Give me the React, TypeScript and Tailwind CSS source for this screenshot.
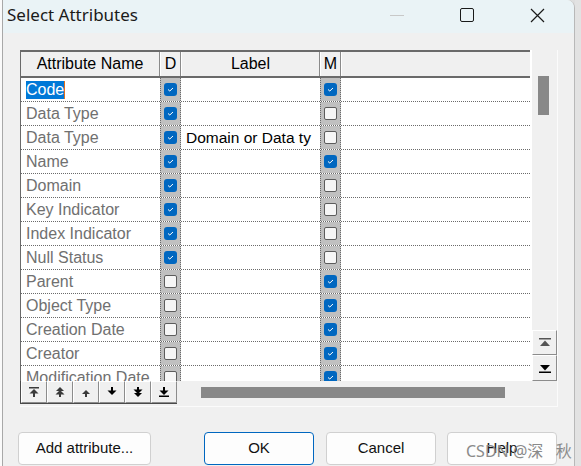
import React from "react";

interface Row {
  name: string;
  d: boolean;
  label?: string;
  m: boolean;
  selected?: boolean;
}

const rows: Row[] = [
  { name: "Code", d: true, m: true, selected: true },
  { name: "Data Type", d: true, m: false },
  { name: "Data Type", d: true, label: "Domain or Data ty", m: false },
  { name: "Name", d: true, m: true },
  { name: "Domain", d: true, m: false },
  { name: "Key Indicator", d: true, m: false },
  { name: "Index Indicator", d: true, m: false },
  { name: "Null Status", d: true, m: false },
  { name: "Parent", d: false, m: true },
  { name: "Object Type", d: false, m: true },
  { name: "Creation Date", d: false, m: true },
  { name: "Creator", d: false, m: true },
  { name: "Modification Date", d: false, m: true },
];

const Check = ({ on }: { on: boolean }) =>
  on ? (
    <div className="w-[13px] h-[13px] rounded-[3px] bg-[#0067c0] flex items-center justify-center">
      <svg width="7" height="5" viewBox="0 0 7 5">
        <path d="M1 2.5 L2.8 4 L6 1" fill="none" stroke="#fff" strokeWidth="1" />
      </svg>
    </div>
  ) : (
    <div className="w-[13px] h-[13px] rounded-[2px] bg-[#f5f5f5] border border-[#5c5c5c]" />
  );

// toolbar glyphs: bar/arrow combos
const ToolIcon = ({ kind }: { kind: number }) => {
  const up = kind < 3;
  const color = up ? "#3a3a3a" : "#000";
  const shapes: Record<number, React.ReactNode> = {
    0: (
      <>
        <rect x="0" y="0" width="10" height="1.5" />
        <path d="M5 2 L9.5 6.5 L0.5 6.5 Z" />
        <rect x="4" y="6" width="2" height="4" />
      </>
    ),
    1: (
      <>
        <path d="M5 0 L9 4 L1 4 Z" />
        <path d="M5 3 L9.5 7.5 L0.5 7.5 Z" />
        <rect x="4" y="7" width="2" height="3" />
      </>
    ),
    2: (
      <>
        <path d="M5 3 L9 7 L1 7 Z" />
        <rect x="4" y="7" width="2" height="3" />
      </>
    ),
    3: (
      <>
        <rect x="4" y="0" width="2" height="4" />
        <path d="M5 8 L9.5 3.5 L0.5 3.5 Z" />
      </>
    ),
    4: (
      <>
        <rect x="4" y="0" width="2" height="3" />
        <path d="M5 7 L9.5 2.5 L0.5 2.5 Z" />
        <path d="M5 10 L9 6 L1 6 Z" />
      </>
    ),
    5: (
      <>
        <rect x="4" y="0" width="2" height="4" />
        <path d="M5 8 L9.5 3.5 L0.5 3.5 Z" />
        <rect x="0" y="8.5" width="10" height="1.5" />
      </>
    ),
  };
  return (
    <svg width="10" height="10" viewBox="0 0 10 10" fill={color}>
      {shapes[kind]}
    </svg>
  );
};

const bevel =
  "bg-[#f0f0f0] border-t border-l border-t-white border-l-white border-b border-r border-b-[#8c8c8c] border-r-[#8c8c8c] flex items-center justify-center";

export default function App() {
  return (
    <div
      className="w-[581px] h-[466px] overflow-hidden flex bg-[#dedede]"
      style={{ fontFamily: '"Liberation Sans", Arial, sans-serif' }}
    >
      {/* window behind, left */}
      <div className="w-[3px] bg-[#fafafa] border-r border-[#a8a8a8]" />

      {/* dialog */}
      <div className="w-[572px] flex flex-col bg-[#f0f0f0] rounded-tr-[8px] border-r border-[#b8b8b8] overflow-hidden">
        {/* title bar */}
        <div className="h-[33px] shrink-0 bg-[#eaf3f6] flex items-center pb-[3px]">
          <div
            className="flex-1 pl-[4px] text-[17px] text-[#1a1a1a]"
            style={{ fontFamily: '"Noto Sans", "Open Sans", sans-serif' }}
          >
            Select Attributes
          </div>
          <div className="w-[70px] h-full flex items-center justify-center">
            <div className="w-[14px] h-px bg-[#c8c8c8]" />
          </div>
          <div className="w-[70px] h-full flex items-center justify-center">
            <div className="w-[14px] h-[14px] rounded-[2px] border border-[#1a1a1a]" />
          </div>
          <div className="w-[70px] h-full flex items-center justify-center mr-[2px]">
            <svg width="15" height="15" viewBox="0 0 15 15">
              <path d="M1 1 L14 14 M14 1 L1 14" stroke="#1a1a1a" strokeWidth="1.2" />
            </svg>
          </div>
        </div>

        {/* body */}
        <div className="flex-1 flex flex-col pl-[17px] pt-[17px]">
          {/* grid */}
          <div className="w-[538px] h-[357px] flex flex-col border-r border-b border-[#fbfbfb]">
            <div className="h-[331px] flex">
              {/* table */}
              <div className="w-[511px] flex flex-col border-l border-[#6a6a6a] overflow-hidden">
                {/* header */}
                <div className="h-[28px] shrink-0 flex border-t-2 border-b-2 border-[#6a6a6a] bg-[#f0f0f0] text-[16px] text-black">
                  <div className="w-[139px] flex items-center justify-center border-r border-[#8a8a8a]">
                    Attribute Name
                  </div>
                  <div className="w-[21px] flex items-center justify-center border-r border-[#8a8a8a] border-l border-l-white">
                    D
                  </div>
                  <div className="w-[139px] flex items-center justify-center border-r border-[#8a8a8a] border-l border-l-white">
                    Label
                  </div>
                  <div className="w-[21px] flex items-center justify-center border-r border-[#8a8a8a] border-l border-l-white">
                    M
                  </div>
                  <div className="flex-1 border-l border-white" />
                </div>

                {/* rows */}
                <div className="flex-1 overflow-hidden bg-white text-[16px]">
                  {rows.map((r, i) => (
                    <div
                      key={i}
                      className="h-[24px] flex border-b border-dotted border-[#6a6a6a]"
                    >
                      <div className="w-[139px] flex items-center pl-[5px] whitespace-nowrap text-[#707070]">
                        {r.selected ? (
                          <span className="bg-[#0078d7] text-white leading-[18px] border-r border-[#e0701c]">
                            {r.name}
                          </span>
                        ) : (
                          r.name
                        )}
                      </div>
                      <div className="w-[21px] flex items-center justify-center bg-[#c0c0c0] border-x border-dotted border-[#6a6a6a]">
                        <Check on={r.d} />
                      </div>
                      <div className="w-[139px] flex items-center pl-[5px] whitespace-nowrap overflow-hidden text-black text-[15.5px]">
                        {r.label}
                      </div>
                      <div className="w-[21px] flex items-center justify-center bg-[#c0c0c0] border-x border-dotted border-[#6a6a6a]">
                        <Check on={r.m} />
                      </div>
                      <div className="flex-1" />
                    </div>
                  ))}
                </div>
              </div>

              {/* vertical scrollbar */}
              <div className="w-[27px] flex flex-col border-l-2 border-white bg-[#f0f0f0]">
                <div className="h-[26px]" />
                <div className="ml-[6px] w-[11px] h-[39px] bg-[#888888]" />
                <div className="flex-1" />
                <div className={`w-[25px] h-[25px] ${bevel} border-b-[#6a6a6a] border-r-[#6a6a6a]`}>
                  <svg width="12" height="9" viewBox="0 0 12 9" fill="#555">
                    <rect x="0" y="0" width="12" height="1.5" />
                    <path d="M6 2.5 L11 8 L1 8 Z" />
                  </svg>
                </div>
                <div className={`w-[25px] h-[26px] ${bevel} border-b-[#6a6a6a] border-r-[#6a6a6a]`}>
                  <svg width="12" height="9" viewBox="0 0 12 9" fill="#000">
                    <path d="M6 6.5 L11 1 L1 1 Z" />
                    <rect x="0" y="7.5" width="12" height="1.5" />
                  </svg>
                </div>
              </div>
            </div>

            {/* toolbar + horizontal scrollbar */}
            <div className="flex-1 flex">
              <div className="flex h-[23px] border-l border-b border-[#4a4a4a]">
                {[0, 1, 2, 3, 4, 5].map((k) => (
                  <div key={k} className={`w-[26px] h-[22px] ${bevel}`}>
                    <ToolIcon kind={k} />
                  </div>
                ))}
              </div>
              <div className="flex-1 pl-[24px] pt-[6px]">
                <div className="w-[304px] h-[11px] bg-[#888888]" />
              </div>
            </div>
          </div>

          {/* buttons */}
          <div className="mt-[25px] flex text-[15px] text-[#111]">
            <div className="w-[133px] h-[33px] -ml-[2px] rounded-[4px] border border-[#d0d0d0] bg-[#fdfdfd] flex items-center justify-center">
              Add attribute...
            </div>
            <div className="ml-[53px] w-[110px] h-[33px] rounded-[4px] border border-[#0067c0] bg-[#fdfdfd] flex items-center justify-center">
              OK
            </div>
            <div className="ml-[12px] w-[110px] h-[33px] rounded-[4px] border border-[#d0d0d0] bg-[#fdfdfd] flex items-center justify-center">
              Cancel
            </div>
            <div className="relative ml-[11px] w-[110px] h-[33px] rounded-[4px] border border-[#d0d0d0] bg-[#fdfdfd] flex items-center justify-center">
              Help
              <span
                className="absolute left-[18px] top-[6px] text-[16px] text-[#8a8a8a] whitespace-nowrap"
                style={{ fontFamily: '"Noto Sans", "Noto Sans CJK SC", sans-serif' }}
              >
                CSDN @深&nbsp;&nbsp;&nbsp;秋
              </span>
            </div>
          </div>
        </div>
      </div>

      {/* window behind, right */}
      <div className="flex-1 bg-[#e2e2e2]" />
    </div>
  );
}
